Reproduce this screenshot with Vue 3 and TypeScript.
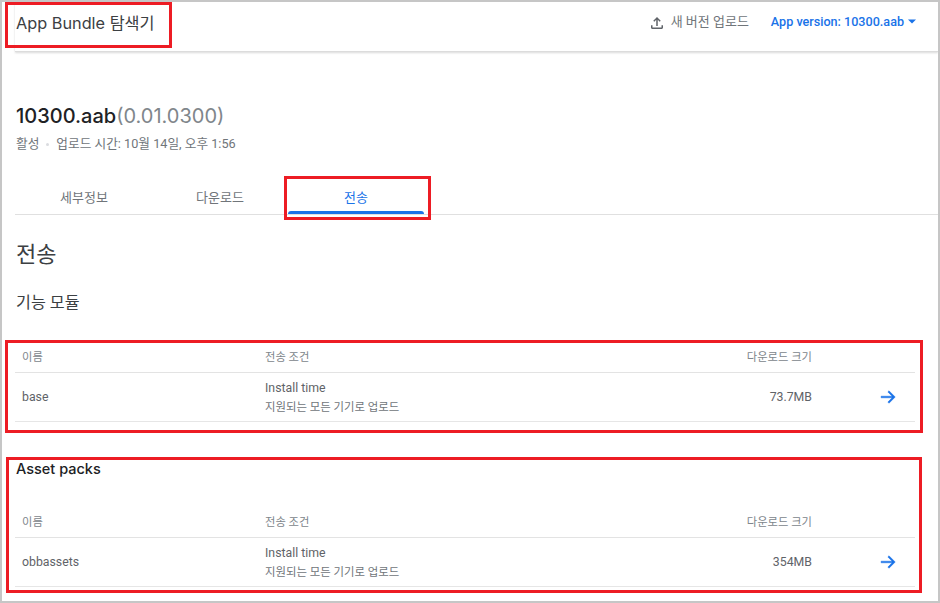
<template>
  <div class="page">
    <header class="topbar">
      <h1 class="app-title">App Bundle 탐색기</h1>
      <div class="top-actions">
        <button class="upload-btn">
          <svg width="18" height="18" viewBox="0 0 24 24" fill="#5f6368"><path d="M18 15v3H6v-3H4v3c0 1.1.9 2 2 2h12c1.1 0 2-.9 2-2v-3h-2zM7 9l1.41 1.41L11 7.83V16h2V7.83l2.59 2.58L17 9l-5-5-5 5z" /></svg>
          <span>새 버전 업로드</span>
        </button>
        <button class="version-btn">
          App version: 10300.aab
          <svg width="8" height="5" viewBox="0 0 8 5" fill="#1a73e8"><path d="M0 0.5h8L4 4.5z" /></svg>
        </button>
      </div>
    </header>

    <main class="content">
      <div class="bundle-title">10300.aab<span class="bundle-version">(0.01.0300)</span></div>
      <div class="bundle-meta">
        <span>활성</span>
        <span class="dot"></span>
        <span>업로드 시간: 10월 14일, 오후 1:56</span>
      </div>

      <nav class="tabs">
        <div v-for="tab in tabs" :key="tab" class="tab" :class="{ active: tab === activeTab }">{{ tab }}</div>
      </nav>

      <h2 class="section-title">전송</h2>
      <h3 class="sub-title">기능 모듈</h3>

      <div class="table first">
        <div class="row head">
          <div>이름</div>
          <div>전송 조건</div>
          <div class="size">다운로드 크기</div>
          <div></div>
        </div>
        <div class="row body">
          <div class="name">base</div>
          <div class="cond-cell">
            <div class="cond">Install time</div>
            <div class="cond-sub">지원되는 모든 기기로 업로드</div>
          </div>
          <div class="size value">73.7MB</div>
          <div class="arrow-cell">
            <svg width="20" height="20" viewBox="0 0 24 24" fill="#1a73e8" stroke="#1a73e8" stroke-width="0.5"><path d="M12 4.5l-1.4 1.4 5.1 5.1H2.5v2h13.2l-5.1 5.1 1.4 1.4 7.5-7.5z" /></svg>
          </div>
        </div>
      </div>

      <h3 class="pack-title">Asset packs</h3>

      <div class="table">
        <div class="row head">
          <div>이름</div>
          <div>전송 조건</div>
          <div class="size">다운로드 크기</div>
          <div></div>
        </div>
        <div class="row body">
          <div class="name">obbassets</div>
          <div class="cond-cell">
            <div class="cond">Install time</div>
            <div class="cond-sub">지원되는 모든 기기로 업로드</div>
          </div>
          <div class="size value">354MB</div>
          <div class="arrow-cell">
            <svg width="20" height="20" viewBox="0 0 24 24" fill="#1a73e8" stroke="#1a73e8" stroke-width="0.5"><path d="M12 4.5l-1.4 1.4 5.1 5.1H2.5v2h13.2l-5.1 5.1 1.4 1.4 7.5-7.5z" /></svg>
          </div>
        </div>
      </div>
    </main>

    <!-- annotation boxes drawn over the screenshot -->
    <div class="mark mark-title"></div>
    <div class="mark mark-tab"></div>
    <div class="mark mark-table1"></div>
    <div class="mark mark-table2"></div>
  </div>
</template>

<script setup lang="ts">
const tabs: string[] = ['세부정보', '다운로드', '전송']
const activeTab = '전송'
</script>

<style>
html,
body {
  margin: 0;
  background: #fff;
}
</style>

<style scoped>
.page {
  position: relative;
  box-sizing: border-box;
  width: 940px;
  height: 603px;
  overflow: hidden;
  background: #fff;
  border: 2px solid #c6c6c6;
  font-family: Roboto, "Noto Sans CJK KR", sans-serif;
  color: #5f6368;
}

.topbar {
  display: flex;
  justify-content: space-between;
  align-items: center;
  height: 49px;
  margin-left: 13px;
  padding: 0 22px 0 1px;
  border-bottom: 1px solid #dcdcdc;
  box-shadow: 0 1px 2px rgba(0, 0, 0, 0.15);
}

.app-title {
  margin: 0 0 10px;
  font-family: Inter, "Noto Sans CJK KR", sans-serif;
  font-size: 16.3px;
  font-weight: 400;
  color: #3c4043;
}

.top-actions {
  display: flex;
  align-items: center;
  gap: 22px;
  margin-bottom: 11px;
}

.upload-btn,
.version-btn {
  display: flex;
  align-items: center;
  padding: 0;
  border: none;
  background: none;
  font-family: inherit;
  font-size: 12.6px;
}

.upload-btn {
  gap: 5px;
  font-size: 13px;
  color: #70757a;
}

.upload-btn span {
  margin-bottom: 2px;
}

.upload-btn svg {
  margin-top: 3px;
}

.version-btn {
  gap: 4px;
  font-weight: 500;
  color: #1a73e8;
}

.content {
  padding-left: 13px;
}

.bundle-title {
  margin: 51px 0 0 1px;
  font-family: Inter, sans-serif;
  font-size: 20px;
  line-height: 26px;
  font-weight: 500;
  color: #202124;
}

.bundle-version {
  font-weight: 400;
  color: #80868b;
}

.bundle-meta {
  display: flex;
  align-items: center;
  gap: 7px;
  margin: 6px 0 0 1px;
  font-size: 12.7px;
  line-height: 18px;
  color: #70757a;
}

.dot {
  width: 3px;
  height: 3px;
  border-radius: 50%;
  background: #dadce0;
}

.tabs {
  display: flex;
  height: 34px;
  margin-top: 27px;
  padding-left: 1px;
  border-bottom: 1px solid #e0e0e0;
}

.tab {
  position: relative;
  display: flex;
  align-items: center;
  justify-content: center;
  width: 136px;
  padding-bottom: 1px;
  font-size: 13px;
  color: #70757a;
}

.tab.active {
  color: #1a73e8;
}

.tab.active::after {
  content: "";
  position: absolute;
  left: 0;
  right: 0;
  bottom: 0;
  height: 3px;
  border-radius: 3px 3px 0 0;
  background: #1a73e8;
}

.section-title {
  margin: 26px 0 0 1px;
  font-size: 22px;
  line-height: 28px;
  font-weight: 400;
  color: #3c4043;
}

.sub-title {
  margin: 23px 0 0 1px;
  font-size: 16.2px;
  line-height: 22px;
  font-weight: 400;
  color: #3c4043;
}

.table {
  width: 900px;
}

.table.first {
  margin-top: 25px;
}

.row {
  display: grid;
  grid-template-columns: 243px 1fr 140px 103px;
  align-items: center;
  padding-left: 7px;
}

.head {
  height: 33px;
  font-size: 11.3px;
  color: #80868b;
  border-bottom: 1px solid #e3e3e3;
}

.body {
  height: 49px;
  box-sizing: border-box;
  font-size: 12.3px;
  border-bottom: 1px solid #e6e6e6;
}

.size {
  text-align: right;
}

.value {
  color: #5f6368;
}

.name {
  color: #5f6368;
}

.cond-cell {
  padding-top: 1px;
}

.cond {
  line-height: 19px;
  color: #5f6368;
}

.cond-sub {
  font-size: 11.4px;
  line-height: 18px;
  color: #70757a;
}

.arrow-cell {
  display: flex;
  justify-content: flex-end;
  padding-right: 16px;
}

.pack-title {
  margin: 37px 0 25px 1px;
  font-family: Inter, sans-serif;
  font-size: 14.5px;
  line-height: 20px;
  font-weight: 500;
  color: #202124;
}

.mark {
  position: absolute;
  box-sizing: border-box;
  border: 3px solid #ed1c24;
}

.mark-title {
  left: 3px;
  top: 0;
  width: 167px;
  height: 46px;
}

.mark-tab {
  left: 282px;
  top: 174px;
  width: 147px;
  height: 44px;
}

.mark-table1 {
  left: 3px;
  top: 338px;
  width: 918px;
  height: 93px;
}

.mark-table2 {
  left: 4px;
  top: 455px;
  width: 916px;
  height: 136px;
}
</style>
